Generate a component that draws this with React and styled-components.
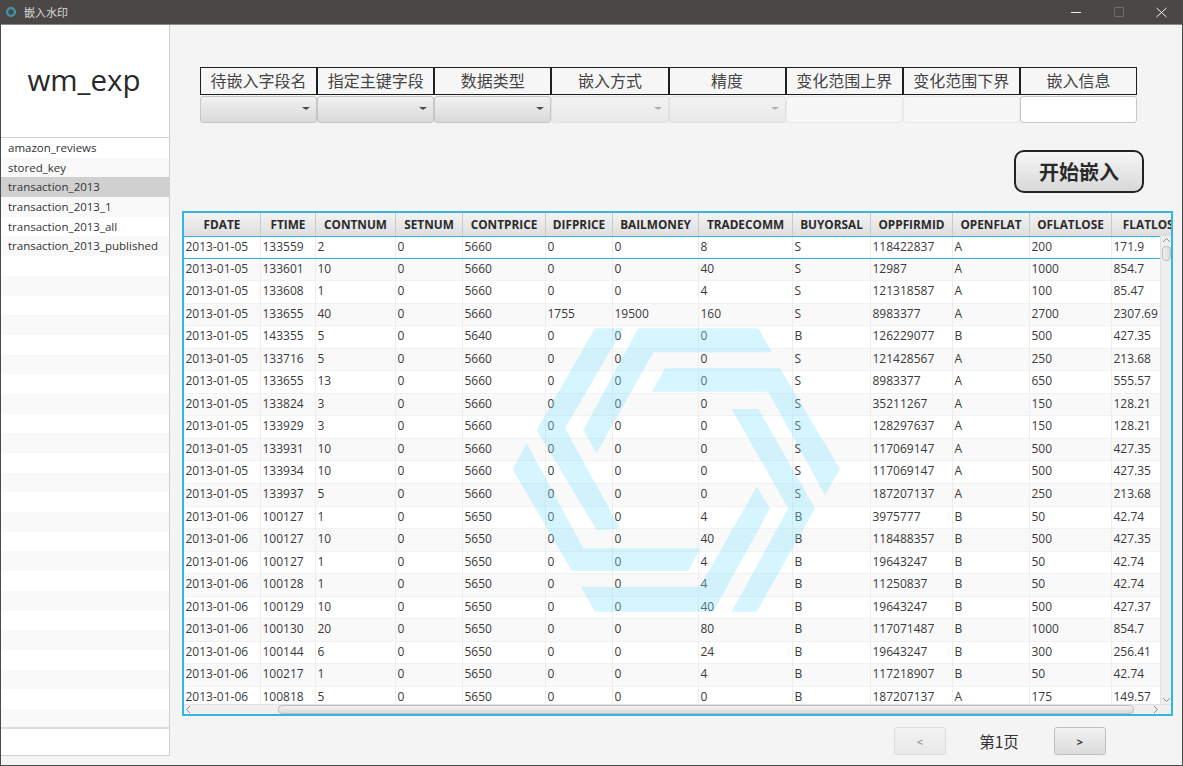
import React from "react";
import styled, { createGlobalStyle } from "styled-components";

const FONT = `"Open Sans", "Noto Sans CJK SC", sans-serif`;
const CJK = `"Noto Sans CJK SC", "Open Sans", sans-serif`;
const ACCENT = "#35b6e2";

const COL_WIDTHS = [77, 55, 80, 67, 83, 67, 86, 94, 78, 82, 77, 82, 80];
const COLUMNS = COL_WIDTHS.map((w) => `${w}px`).join(" ");

const HEADERS = [
  "FDATE", "FTIME", "CONTNUM", "SETNUM", "CONTPRICE", "DIFPRICE", "BAILMONEY",
  "TRADECOMM", "BUYORSAL", "OPPFIRMID", "OPENFLAT", "OFLATLOSE", "FLATLOSE",
];

const ROWS = [
  ["2013-01-05", "133559", "2", "0", "5660", "0", "0", "8", "S", "118422837", "A", "200", "171.9"],
  ["2013-01-05", "133601", "10", "0", "5660", "0", "0", "40", "S", "12987", "A", "1000", "854.7"],
  ["2013-01-05", "133608", "1", "0", "5660", "0", "0", "4", "S", "121318587", "A", "100", "85.47"],
  ["2013-01-05", "133655", "40", "0", "5660", "1755", "19500", "160", "S", "8983377", "A", "2700", "2307.69"],
  ["2013-01-05", "143355", "5", "0", "5640", "0", "0", "0", "B", "126229077", "B", "500", "427.35"],
  ["2013-01-05", "133716", "5", "0", "5660", "0", "0", "0", "S", "121428567", "A", "250", "213.68"],
  ["2013-01-05", "133655", "13", "0", "5660", "0", "0", "0", "S", "8983377", "A", "650", "555.57"],
  ["2013-01-05", "133824", "3", "0", "5660", "0", "0", "0", "S", "35211267", "A", "150", "128.21"],
  ["2013-01-05", "133929", "3", "0", "5660", "0", "0", "0", "S", "128297637", "A", "150", "128.21"],
  ["2013-01-05", "133931", "10", "0", "5660", "0", "0", "0", "S", "117069147", "A", "500", "427.35"],
  ["2013-01-05", "133934", "10", "0", "5660", "0", "0", "0", "S", "117069147", "A", "500", "427.35"],
  ["2013-01-05", "133937", "5", "0", "5660", "0", "0", "0", "S", "187207137", "A", "250", "213.68"],
  ["2013-01-06", "100127", "1", "0", "5650", "0", "0", "4", "B", "3975777", "B", "50", "42.74"],
  ["2013-01-06", "100127", "10", "0", "5650", "0", "0", "40", "B", "118488357", "B", "500", "427.35"],
  ["2013-01-06", "100127", "1", "0", "5650", "0", "0", "4", "B", "19643247", "B", "50", "42.74"],
  ["2013-01-06", "100128", "1", "0", "5650", "0", "0", "4", "B", "11250837", "B", "50", "42.74"],
  ["2013-01-06", "100129", "10", "0", "5650", "0", "0", "40", "B", "19643247", "B", "500", "427.37"],
  ["2013-01-06", "100130", "20", "0", "5650", "0", "0", "80", "B", "117071487", "B", "1000", "854.7"],
  ["2013-01-06", "100144", "6", "0", "5650", "0", "0", "24", "B", "19643247", "B", "300", "256.41"],
  ["2013-01-06", "100217", "1", "0", "5650", "0", "0", "4", "B", "117218907", "B", "50", "42.74"],
  ["2013-01-06", "100818", "5", "0", "5650", "0", "0", "0", "B", "187207137", "A", "175", "149.57"],
];

const TABLES = [
  "amazon_reviews",
  "stored_key",
  "transaction_2013",
  "transaction_2013_1",
  "transaction_2013_all",
  "transaction_2013_published",
];

const FIELDS = [
  { label: "待嵌入字段名", kind: "combo" },
  { label: "指定主键字段", kind: "combo" },
  { label: "数据类型", kind: "combo" },
  { label: "嵌入方式", kind: "combo", disabled: true },
  { label: "精度", kind: "combo", disabled: true },
  { label: "变化范围上界", kind: "input", disabled: true },
  { label: "变化范围下界", kind: "input", disabled: true },
  { label: "嵌入信息", kind: "input" },
];

const WATERMARK = [
  "415,25 775,25 815,97 460,97 290,400 250,330",
  "285,25 370,25 195,325 360,625 290,630 110,330",
  "495,145 840,145 1020,447 975,525 805,215 455,215",
  "695,267 775,267 945,565 770,875 695,875 865,565",
  "770,500 810,565 640,875 285,875 243,800 600,800",
  "80,370 250,685 600,685 565,752 215,752 38,447",
];

const GlobalStyle = createGlobalStyle`
  html, body {
    margin: 0;
    padding: 0;
    overflow: hidden;
    background: #f4f4f4;
  }
  * { box-sizing: border-box; }
`;

const Window = styled.div`
  width: 1183px;
  height: 766px;
  display: flex;
  flex-direction: column;
  border: 1px solid #4c4a48;
  border-top: none;
  background: #f4f4f4;
  font-family: ${FONT};
  overflow: hidden;
`;

const TitleBar = styled.div`
  height: 25px;
  flex: none;
  margin: 0 -1px;
  display: flex;
  align-items: center;
  padding-left: 5px;
  background: #4a4846;
  border-bottom: 1px solid #8c8b89;
  color: #d8d8d8;
  font-family: ${CJK};
  font-size: 11px;
`;

const TitleIcon = styled.svg`
  width: 12px;
  height: 12px;
  margin-right: 7px;
`;

const TitleText = styled.span`
  flex: 1;
`;

const WindowButton = styled.div`
  width: 43px;
  height: 24px;
  display: flex;
  align-items: center;
  justify-content: center;
`;

const Body = styled.div`
  flex: 1;
  display: flex;
  min-height: 0;
`;

const Sidebar = styled.aside`
  width: 169px;
  height: 731px;
  flex: none;
  display: flex;
  flex-direction: column;
  background: #fff;
  border-right: 1px solid #cfcfcf;
  border-bottom: 1px solid #cfcfcf;
`;

const Logo = styled.div`
  height: 113px;
  flex: none;
  display: flex;
  align-items: center;
  justify-content: center;
  padding: 0 2px 3px 0;
  border-bottom: 1px solid #d2d2d2;
  color: #2a2a2a;
  font-size: 29.5px;
`;

const TableList = styled.div`
  flex: 1;
  overflow: hidden;
`;

const TableItem = styled.div`
  height: 19.7px;
  line-height: 20.4px;
  padding-left: 7px;
  font-size: 11.5px;
  color: #333;
  white-space: nowrap;
  background: ${(p) => (p.$selected ? "#d0d0d0" : p.$odd ? "#f9f9f9" : "#fff")};
`;

const SearchBox = styled.div`
  height: 28px;
  flex: none;
  background: #fff;
  border-top: 2px solid #dedede;
`;

const Main = styled.main`
  flex: 1;
  min-width: 0;
  padding: 42px 0 0 30px;
`;

const FieldGrid = styled.div`
  width: 937px;
  display: grid;
  grid-template-columns: repeat(8, 1fr);
  grid-template-rows: 28px 28px;
`;

const FieldLabel = styled.div`
  display: flex;
  align-items: center;
  justify-content: center;
  padding-bottom: 2px;
  background: #f6f6f6;
  border: 1px solid #1f1f1f;
  color: #444;
  font-family: ${CJK};
  font-size: 16px;
  white-space: nowrap;
`;

const Combo = styled.div`
  margin-top: 1px;
  position: relative;
  border: 1px solid #c6c6c6;
  border-radius: 3px;
  background: linear-gradient(#f1f1f1, #d9d9d9);
  opacity: ${(p) => (p.$disabled ? 0.4 : 1)};

  &::after {
    content: "";
    position: absolute;
    right: 6px;
    top: 10px;
    border-left: 4px solid transparent;
    border-right: 4px solid transparent;
    border-top: 3.5px solid #4a4a4a;
  }
`;

const TextBox = styled.div`
  margin-top: 1px;
  border: 1px solid ${(p) => (p.$disabled ? "#e9e9e9" : "#c8c8c8")};
  border-radius: 3px;
  background: ${(p) => (p.$disabled ? "#f6f6f6" : "#fff")};
`;

const StartButton = styled.button`
  display: block;
  width: 130px;
  height: 43px;
  margin: 27px 0 0 814px;
  padding: 0;
  border: 2px solid #222;
  border-radius: 10px;
  background: linear-gradient(#f6f6f6, #d8d8d8);
  color: #2a2a2a;
  font-family: ${CJK};
  font-size: 20px;
  font-weight: 700;
`;

const TableFrame = styled.div`
  position: relative;
  width: 991px;
  height: 505px;
  margin: 18px 0 0 -18px;
  display: flex;
  flex-direction: column;
  border: 2px solid ${ACCENT};
  background: #fff;
  overflow: hidden;
`;

const HeaderRow = styled.div`
  height: 23px;
  flex: none;
  display: grid;
  grid-template-columns: ${COLUMNS};
  overflow: hidden;
  background: linear-gradient(#f3f3f3, #dedede);
`;

const HeaderCell = styled.div`
  display: flex;
  align-items: center;
  justify-content: center;
  padding-bottom: 1px;
  border-right: 1px solid #c9c9c9;
  color: #2b2b2b;
  font-size: 11.8px;
  font-weight: 700;
  white-space: nowrap;
  overflow: hidden;
`;

const Middle = styled.div`
  flex: 1;
  min-height: 0;
  display: flex;
`;

const Rows = styled.div`
  flex: 1;
  min-width: 0;
  overflow: hidden;
`;

const Row = styled.div`
  height: 22.55px;
  display: grid;
  grid-template-columns: ${COLUMNS};
  background: ${(p) => (p.$odd ? "#f9f9f9" : "#fff")};
  border-top: ${(p) => (p.$focused ? `1px solid ${ACCENT}` : "none")};
  border-bottom: ${(p) => (p.$focused ? `1px solid ${ACCENT}` : "none")};
`;

const Cell = styled.div`
  padding-left: 1.5px;
  line-height: 19px;
  border-right: 1px solid #ededed;
  border-bottom: 1px solid #f1f1f1;
  color: #3a3a3a;
  font-size: 12px;
  white-space: nowrap;
  overflow: hidden;
`;

const VBar = styled.div`
  width: 11px;
  flex: none;
  display: flex;
  flex-direction: column;
  align-items: center;
  background: #efefef;
  border-left: 1px solid #e2e2e2;
`;

const VThumb = styled.div`
  width: 9px;
  height: 15px;
  margin-top: 1px;
  border: 1px solid #bdbdbd;
  border-radius: 4px;
  background: linear-gradient(90deg, #f2f2f2, #dadada);
`;

const HBar = styled.div`
  height: 10px;
  flex: none;
  display: flex;
  align-items: center;
  background: #efefef;
  border-top: 1px solid #e2e2e2;
`;

const HThumb = styled.div`
  width: 856px;
  height: 9px;
  margin: 0 17px 0 85px;
  border: 1px solid #bdbdbd;
  border-radius: 4px;
  background: linear-gradient(#f2f2f2, #dadada);
`;

const Arrow = styled.svg`
  width: 9px;
  height: 9px;
  flex: none;
  fill: none;
  stroke: #8c8c8c;
  stroke-width: 1;
`;

const DownArrow = styled(Arrow)`
  margin-top: auto;
`;

const Watermark = styled.svg`
  position: absolute;
  left: 316px;
  top: 107px;
  width: 350px;
  height: 310px;
  pointer-events: none;
  filter: blur(0.5px);
`;

const Pager = styled.div`
  display: flex;
  align-items: center;
  margin: 11px 0 0 694px;
`;

const PageButton = styled.div`
  width: 52px;
  height: 28px;
  display: flex;
  align-items: center;
  justify-content: center;
  border: 1px solid #bfbfbf;
  border-radius: 3px;
  background: linear-gradient(#f1f1f1, #dcdcdc);
  color: #333;
  font-size: 11px;
  font-weight: 700;
  opacity: ${(p) => (p.$disabled ? 0.45 : 1)};
`;

const PageLabel = styled.div`
  width: 108px;
  padding-right: 2px;
  text-align: center;
  color: #333;
  font-family: ${CJK};
  font-size: 15.5px;
`;

export default function App() {
  return (
    <>
      <GlobalStyle />
      <Window>
        <TitleBar>
          <TitleIcon viewBox="0 0 12 12">
            <circle cx="6" cy="6" r="3.9" fill="none" stroke="#3f93ad" strokeWidth="2.4" />
          </TitleIcon>
          <TitleText>嵌入水印</TitleText>
          <WindowButton>
            <svg width="10" height="10" viewBox="0 0 10 10">
              <path d="M0 5.5H10" stroke="#f2f2f2" strokeWidth="1" />
            </svg>
          </WindowButton>
          <WindowButton>
            <svg width="10" height="10" viewBox="0 0 10 10">
              <rect x="0.5" y="0.5" width="9" height="9" fill="none" stroke="#6d6b69" />
            </svg>
          </WindowButton>
          <WindowButton>
            <svg width="11" height="11" viewBox="0 0 11 11">
              <path d="M0.5 1L10.5 10M10.5 1L0.5 10" stroke="#f2f2f2" strokeWidth="1" />
            </svg>
          </WindowButton>
        </TitleBar>
        <Body>
          <Sidebar>
            <Logo>wm_exp</Logo>
            <TableList>
              {Array.from({ length: 30 }, (_, i) => (
                <TableItem key={i} $odd={i % 2 === 1} $selected={i === 2}>
                  {TABLES[i]}
                </TableItem>
              ))}
            </TableList>
            <SearchBox />
          </Sidebar>
          <Main>
            <FieldGrid>
              {FIELDS.map((f) => (
                <FieldLabel key={f.label}>{f.label}</FieldLabel>
              ))}
              {FIELDS.map((f) =>
                f.kind === "combo" ? (
                  <Combo key={f.label} $disabled={f.disabled} />
                ) : (
                  <TextBox key={f.label} $disabled={f.disabled} />
                )
              )}
            </FieldGrid>
            <StartButton>开始嵌入</StartButton>
            <TableFrame>
              <HeaderRow>
                {HEADERS.map((h) => (
                  <HeaderCell key={h}>{h}</HeaderCell>
                ))}
              </HeaderRow>
              <Middle>
                <Rows>
                  {ROWS.map((row, i) => (
                    <Row key={i} $odd={i % 2 === 1} $focused={i === 0}>
                      {row.map((value, j) => (
                        <Cell key={j}>{value}</Cell>
                      ))}
                    </Row>
                  ))}
                </Rows>
                <VBar>
                  <Arrow viewBox="0 0 9 9">
                    <path d="M1 6L4.5 2.5L8 6" />
                  </Arrow>
                  <VThumb />
                  <DownArrow viewBox="0 0 9 9">
                    <path d="M1 3L4.5 6.5L8 3" />
                  </DownArrow>
                </VBar>
              </Middle>
              <HBar>
                <Arrow viewBox="0 0 9 9">
                  <path d="M6 1L2.5 4.5L6 8" />
                </Arrow>
                <HThumb />
                <Arrow viewBox="0 0 9 9">
                  <path d="M3 1L6.5 4.5L3 8" />
                </Arrow>
              </HBar>
              <Watermark viewBox="0 0 1050 930">
                {WATERMARK.map((points) => (
                  <polygon key={points} points={points} fill="#7fe0ff" opacity="0.33" />
                ))}
              </Watermark>
            </TableFrame>
            <Pager>
              <PageButton $disabled>&lt;</PageButton>
              <PageLabel>第1页</PageLabel>
              <PageButton>&gt;</PageButton>
            </Pager>
          </Main>
        </Body>
      </Window>
    </>
  );
}
